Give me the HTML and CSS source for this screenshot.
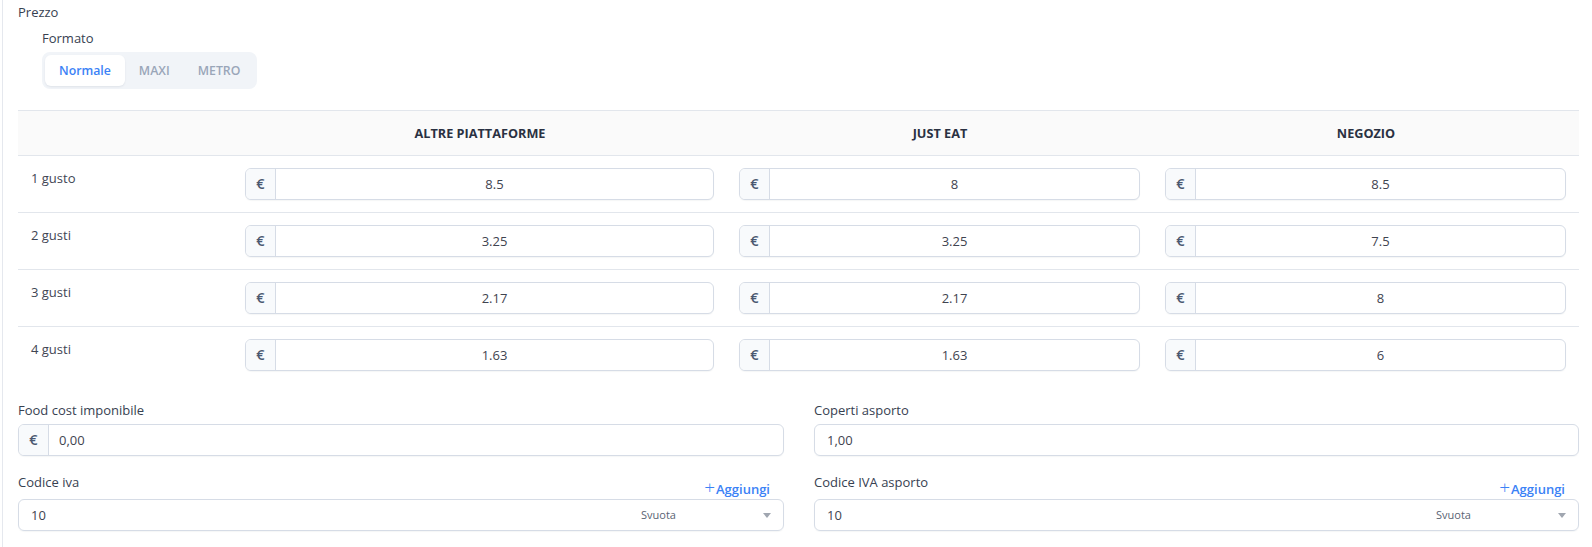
FILE: index.html
```html
<!DOCTYPE html>
<html lang="it">
<head>
	<meta charset="UTF-8">
	<title>Prezzo</title>
	<link rel="stylesheet" href="styles.css">
</head>
<body>
	<div class="panel">
		<div class="title">Prezzo</div>
		<div class="format">
			<div class="format-label">Formato</div>
			<div class="segment">
				<div class="seg active">Normale</div>
				<div class="seg">MAXI</div>
				<div class="seg">METRO</div>
			</div>
		</div>

		<table class="prices">
			<colgroup>
				<col class="c-label">
				<col class="c-one">
				<col class="c-two">
				<col class="c-three">
			</colgroup>
			<thead>
				<tr>
					<th></th>
					<th>ALTRE PIATTAFORME</th>
					<th>JUST EAT</th>
					<th>NEGOZIO</th>
				</tr>
			</thead>
			<tbody>
				<tr>
					<td class="row-label">1 gusto</td>
					<td><div class="money"><span class="euro">€</span><span class="val">8.5</span></div></td>
					<td><div class="money"><span class="euro">€</span><span class="val">8</span></div></td>
					<td><div class="money"><span class="euro">€</span><span class="val">8.5</span></div></td>
				</tr>
				<tr>
					<td class="row-label">2 gusti</td>
					<td><div class="money"><span class="euro">€</span><span class="val">3.25</span></div></td>
					<td><div class="money"><span class="euro">€</span><span class="val">3.25</span></div></td>
					<td><div class="money"><span class="euro">€</span><span class="val">7.5</span></div></td>
				</tr>
				<tr>
					<td class="row-label">3 gusti</td>
					<td><div class="money"><span class="euro">€</span><span class="val">2.17</span></div></td>
					<td><div class="money"><span class="euro">€</span><span class="val">2.17</span></div></td>
					<td><div class="money"><span class="euro">€</span><span class="val">8</span></div></td>
				</tr>
				<tr>
					<td class="row-label">4 gusti</td>
					<td><div class="money"><span class="euro">€</span><span class="val">1.63</span></div></td>
					<td><div class="money"><span class="euro">€</span><span class="val">1.63</span></div></td>
					<td><div class="money"><span class="euro">€</span><span class="val">6</span></div></td>
				</tr>
			</tbody>
		</table>

		<div class="fields">
			<div class="field">
				<div class="label">Food cost imponibile</div>
				<div class="money left"><span class="euro">€</span><span class="val">0,00</span></div>
			</div>
			<div class="field">
				<div class="label">Coperti asporto</div>
				<div class="plain">1,00</div>
			</div>
			<div class="field">
				<div class="label-row">
					<span class="label">Codice iva</span>
					<a class="add" href="#"><span class="plus">+</span>Aggiungi</a>
				</div>
				<div class="select">
					<span>10</span>
					<span class="clear">Svuota</span>
					<span class="caret"></span>
				</div>
			</div>
			<div class="field">
				<div class="label-row">
					<span class="label">Codice IVA asporto</span>
					<a class="add" href="#"><span class="plus">+</span>Aggiungi</a>
				</div>
				<div class="select">
					<span>10</span>
					<span class="clear">Svuota</span>
					<span class="caret"></span>
				</div>
			</div>
		</div>
	</div>
</body>
</html>
```

FILE: styles.css
```css
body{
	margin: 0;
	background: #fff;
	font-family: "Open Sans", "Liberation Sans", sans-serif;
	font-size: 13px;
	color: #374151;
}
.panel{
	margin-left: 2px;
	border-left: 1px solid #e5e8ee;
	padding: 3px 13px 0 15px;
	height: 544px;
}
.title{
	line-height: 18px;
}
.format{
	margin-left: 24px;
	margin-top: 8px;
}
.format-label{
	line-height: 18px;
}
.segment{
	display: inline-flex;
	margin-top: 5px;
	padding: 3px;
	background: #f1f4f8;
	border-radius: 8px;
}
.seg{
	height: 31px;
	line-height: 31px;
	padding: 0 14px;
	font-size: 12.3px;
	font-weight: 600;
	color: #9aa6b8;
	border-radius: 6px;
}
.seg.active{
	background: #fff;
	color: #3b82f6;
	box-shadow: 0 1px 2px rgba(30,41,59,0.08);
}

/* tabella prezzi */
.prices{
	width: 1561px;
	margin-top: 21px;
	border-collapse: collapse;
	table-layout: fixed;
}
.c-label{ width: 215px; }
.c-one{ width: 494px; }
.c-two{ width: 426px; }
.c-three{ width: 426px; }
.prices th{
	height: 44px;
	background: #fafafa;
	border-top: 1px solid #e2e6ec;
	border-bottom: 1px solid #e2e6ec;
	font-size: 12.7px;
	font-weight: 700;
	color: #2a3142;
	text-align: center;
	padding: 0;
}
.prices td{
	padding: 12px 13px 12px 12px;
	border-bottom: 1px solid #e2e6ec;
	vertical-align: top;
}
.prices tr:last-child td{
	border-bottom: none;
}
.prices td.row-label{
	padding-top: 13px;
	padding-left: 13px;
	line-height: 18px;
	color: #3f4654;
}

.money{
	display: flex;
	height: 30px;
	border: 1px solid #d6dce6;
	border-radius: 6px;
	background: #fff;
	overflow: hidden;
	box-shadow: 0 1px 1px rgba(30,41,59,0.04);
}
.euro{
	width: 29px;
	flex: none;
	background: #f8fafc;
	border-right: 1px solid #d6dce6;
	text-align: center;
	line-height: 30px;
	font-size: 14.5px;
	font-weight: 600;
	color: #4b5870;
}
.val{
	flex: 1;
	text-align: center;
	line-height: 30px;
	color: #3f4450;
}
.money.left .val{
	text-align: left;
	padding-left: 10px;
}

/* campi in fondo */
.fields{
	display: grid;
	grid-template-columns: 766px 765px;
	column-gap: 30px;
	row-gap: 19px;
	margin-top: 18px;
}
.label{
	display: block;
	line-height: 18px;
	color: #374151;
	margin-bottom: 5px;
}
.label-row{
	display: flex;
	justify-content: space-between;
	height: 24px;
}
.label-row .label{
	margin: 0;
	margin-top: -2px;
}
.add{
	align-self: flex-end;
	margin-right: 14px;
	margin-bottom: 1px;
	line-height: 17px;
	font-weight: 600;
	color: #3b82f6;
	text-decoration: none;
}
.plus{
	font-weight: 300;
	font-size: 19px;
	margin-right: 1px;
}
.plain, .select{
	height: 30px;
	line-height: 30px;
	border: 1px solid #d6dce6;
	border-radius: 6px;
	padding: 0 12px;
	color: #3f4450;
	box-shadow: 0 1px 1px rgba(30,41,59,0.04);
}
.select{
	position: relative;
}
.clear{
	position: absolute;
	right: 107px;
	top: 0;
	font-size: 11px;
	color: #5a6474;
}
.caret{
	position: absolute;
	right: 12px;
	top: 13px;
	border-left: 4px solid transparent;
	border-right: 4px solid transparent;
	border-top: 5px solid #a0a6b0;
}
```
